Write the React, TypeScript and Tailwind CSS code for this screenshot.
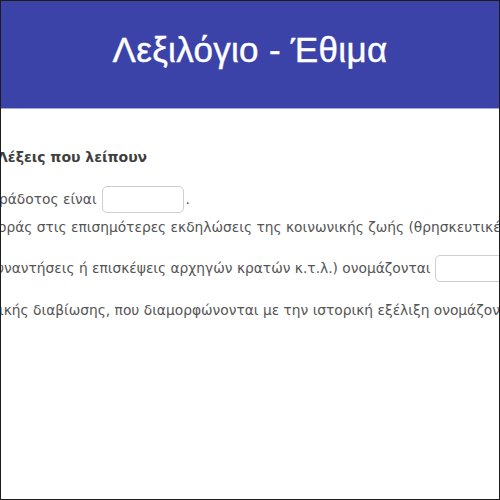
export default function App() {
    return (
        <div className="h-[500px] w-[500px] overflow-hidden border border-[#1c1c1c] bg-white">
            <header className="flex h-[108px] items-center justify-center border-b border-[#a3a6e2] bg-[#3b43a8] pb-[8px]">
                <h1 className="font-['Liberation_Sans',Arial,sans-serif] text-[35px] font-normal tracking-[0.3px] text-white [-webkit-text-stroke:0.4px_white]">
                    Λεξιλόγιο - Έθιμα
                </h1>
            </header>
            <main className="whitespace-nowrap pt-[38px] font-['DejaVu_Sans',sans-serif] text-[13.8px] text-[#555]">
                <h2 className="-ml-[4px] h-[20px] text-[14px] font-semibold leading-[20px] text-[#3f3f3f]">
                    Λέξεις που λείπουν
                </h2>
                <div className="mt-[19px] flex items-center">
                    <span className="-ml-[2px]">ράδοτος είναι</span>
                    <span className="ml-[5px] h-[27px] w-[82px] shrink-0 rounded-[5px] border border-[#cfcfcf] bg-white" />
                    <span className="ml-[2px]">.</span>
                </div>
                <p className="-ml-[3px] mt-[4px] leading-[20px]">
                    οράς στις επισημότερες εκδηλώσεις της κοινωνικής ζωής (θρησκευτικές
                </p>
                <div className="mt-[18px] flex items-center">
                    <span className="-ml-[5px]">υναντήσεις ή επισκέψεις αρχηγών κρατών κ.τ.λ.) ονομάζονται</span>
                    <span className="ml-[4px] h-[27px] w-[82px] shrink-0 rounded-[5px] border border-[#cfcfcf] bg-white" />
                </div>
                <p className="-ml-[2px] mt-[18px] leading-[20px]">
                    ικής διαβίωσης, που διαμορφώνονται με την ιστορική εξέλιξη ονομάζονται
                </p>
            </main>
        </div>
    );
}
